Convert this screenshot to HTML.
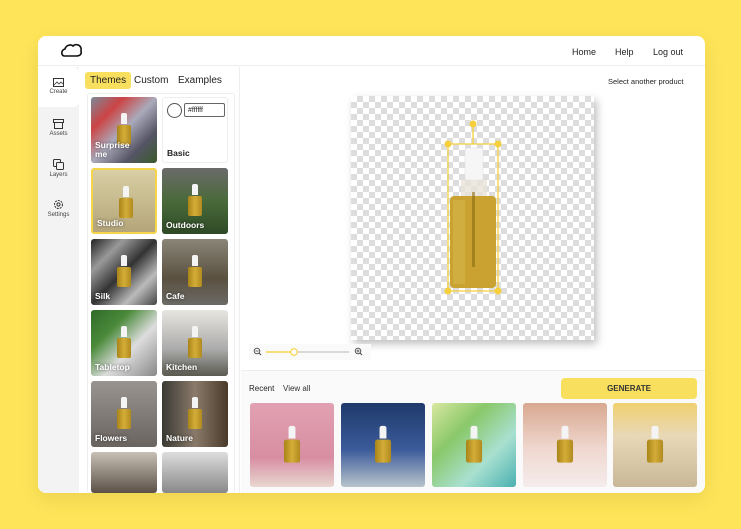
<!DOCTYPE html>
<html><head><meta charset="utf-8"><style>
*{box-sizing:border-box;margin:0;padding:0}
body{width:741px;height:529px;background:#fde458;font-family:"Liberation Sans",sans-serif;position:relative;overflow:hidden}
.card{position:absolute;left:38px;top:36px;width:667px;height:457px;background:#fff;border-radius:8px;overflow:hidden;box-shadow:0 6px 20px rgba(0,0,0,.08)}
.hdr{position:absolute;left:0;top:0;width:667px;height:30px;border-bottom:1px solid #eee}
.nav{position:absolute;top:11px;font-size:9px;color:#222}
.side{position:absolute;left:0;top:31px;width:41px;height:426px;background:#f3f3f3}
.si{position:absolute;left:0;width:41px;text-align:center;font-size:6px;color:#444}
.si svg{display:block;margin:0 auto 2px}
.panel{position:absolute;left:41px;top:31px;width:161px;height:426px;border-right:1px solid #eee}
.tab{position:absolute;top:5px;font-size:10px;color:#222;padding:3px 5px;border-radius:3px}
.tile{position:absolute;width:66px;height:66px;border-radius:3px;overflow:hidden}
.tile span{position:absolute;left:4px;bottom:4px;color:#fff;font-weight:bold;font-size:8.5px;line-height:9px;text-shadow:0 0 3px rgba(0,0,0,.6)}
.b{position:absolute;width:14px;height:22px;left:26px;top:26px}
.b:before{content:"";position:absolute;left:4px;top:-10px;width:6px;height:11px;background:#f4f4f4;border-radius:2px 2px 0 0}
.b:after{content:"";position:absolute;left:0;top:2px;width:14px;height:20px;background:linear-gradient(90deg,#a88418,#d4ad38,#b08a1e);border-radius:2px}
.checker{position:absolute;left:313px;top:60px;width:243px;height:244px;background-color:#fff;background-image:linear-gradient(45deg,#ddd 25%,transparent 25%,transparent 75%,#ddd 75%),linear-gradient(45deg,#ddd 25%,transparent 25%,transparent 75%,#ddd 75%);background-size:12px 12px;background-position:0 0,6px 6px;box-shadow:3px 4px 8px rgba(0,0,0,.25)}
.bottom{position:absolute;left:203px;top:334px;width:464px;height:123px;background:#fafafa;border-top:1px solid #eee}
.th{position:absolute;top:32px;width:84px;height:84px;border-radius:3px;overflow:hidden}
.th .b{left:35px;top:36px;transform:scale(1.15)}
</style></head><body>
<div class="card">
 <div class="hdr">
  <svg style="position:absolute;left:23px;top:7px" width="22" height="15" viewBox="0 0 22 15"><path d="M3 13 C0 12 0 7 4 6 C5 2 10 1 12 3 C15 0 21 2 20 8 C21 12 18 13 15 13 Z" fill="none" stroke="#111" stroke-width="1.6"/></svg>
  <div class="nav" style="left:534px">Home</div>
  <div class="nav" style="left:577px">Help</div>
  <div class="nav" style="left:615px">Log out</div>
 </div>
 <div class="side">
  <div class="si" style="top:0;height:40px;background:#fff;border-radius:0 6px 6px 0;padding-top:11px"><svg width="11" height="9" viewBox="0 0 11 9"><rect x=".5" y=".5" width="10" height="8" fill="none" stroke="#333"/><path d="M1 7l3-3 2 2 2-2 2 2" fill="none" stroke="#333" stroke-width=".8"/></svg>Create</div>
  <div class="si" style="top:52px"><svg width="11" height="10" viewBox="0 0 11 10"><rect x=".5" y=".5" width="10" height="3" fill="none" stroke="#333"/><rect x="1.5" y="3.5" width="8" height="6" fill="none" stroke="#333"/></svg>Assets</div>
  <div class="si" style="top:92px"><svg width="11" height="11" viewBox="0 0 11 11"><rect x=".5" y=".5" width="7" height="7" rx="1" fill="none" stroke="#333"/><rect x="3.5" y="3.5" width="7" height="7" rx="1" fill="#f3f3f3" stroke="#333"/></svg>Layers</div>
  <div class="si" style="top:132px"><svg width="11" height="11" viewBox="0 0 11 11"><circle cx="5.5" cy="5.5" r="4" fill="none" stroke="#333" stroke-dasharray="2 1"/><circle cx="5.5" cy="5.5" r="1.6" fill="none" stroke="#333"/></svg>Settings</div>
 </div>
 <div class="panel">
  <div class="tab" style="left:6px;background:#f9df5e">Themes</div>
  <div class="tab" style="left:50px">Custom</div>
  <div class="tab" style="left:94px">Examples</div>
  <div style="position:absolute;left:8px;top:26px;width:148px;height:400px;border:1px solid #eee;border-bottom:none;border-radius:3px"></div>
  <div class="tile" style="left:12px;top:30px;background:linear-gradient(135deg,#7a8a9a,#c44,#aab,#556,#3a5a2a)"><div class="b"></div><span>Surprise<br>me</span></div>
  <div class="tile" style="left:83px;top:30px;border:1px solid #eee;background:#fff"><div style="position:absolute;left:4px;top:5px;width:15px;height:15px;border:1px solid #555;border-radius:50%"></div><div style="position:absolute;left:21px;top:5px;width:41px;height:14px;border:1px solid #666;border-radius:2px;font-size:7px;padding:3px 3px;color:#222">#ffffff</div><span style="color:#222;text-shadow:none">Basic</span></div>
  <div class="tile" style="left:12px;top:101px;background:linear-gradient(#d9cfa4,#b4a57a);border:2px solid #f6d54b"><div class="b"></div><span>Studio</span></div>
  <div class="tile" style="left:83px;top:101px;background:linear-gradient(#6a6a6a,#4a6a3a 50%,#2e4a26)"><div class="b"></div><span>Outdoors</span></div>
  <div class="tile" style="left:12px;top:172px;background:linear-gradient(135deg,#222,#999,#333,#bbb,#444)"><div class="b"></div><span>Silk</span></div>
  <div class="tile" style="left:83px;top:172px;background:linear-gradient(#8a8578,#5a5040 60%,#6b6a66)"><div class="b"></div><span>Cafe</span></div>
  <div class="tile" style="left:12px;top:243px;background:linear-gradient(135deg,#2f6a2a,#4a8a3a,#ddd 60%,#888)"><div class="b"></div><span>Tabletop</span></div>
  <div class="tile" style="left:83px;top:243px;background:linear-gradient(#e8e6e0,#aaa 60%,#5a5a50)"><div class="b"></div><span>Kitchen</span></div>
  <div class="tile" style="left:12px;top:314px;background:linear-gradient(#9a9490,#6a6460)"><div class="b"></div><span>Flowers</span></div>
  <div class="tile" style="left:83px;top:314px;background:linear-gradient(90deg,#3a3a34,#8a7a6a,#4a3a2a)"><div class="b"></div><span>Nature</span></div>
  <div class="tile" style="left:12px;top:385px;height:41px;background:linear-gradient(#c8c0b4,#5a5048)"></div>
  <div class="tile" style="left:83px;top:385px;height:41px;background:linear-gradient(#ddd,#888)"></div>
 </div>
 <div style="position:absolute;left:570px;top:41px;font-size:7.5px;color:#222">Select another product</div>
 <div class="checker"></div>
 <svg style="position:absolute;left:403px;top:46px" width="70" height="220" viewBox="0 0 70 220">
  <rect x="24" y="66" width="18" height="32" rx="2" fill="#f6f6f6" stroke="#ddd" stroke-width=".5"/>
  <rect x="20" y="98" width="26" height="17" fill="#e8e4d8" opacity=".8"/>
  <rect x="9" y="114" width="46" height="92" rx="4" fill="#c9a232"/>
  <rect x="12" y="118" width="12" height="84" fill="#d7b54a" opacity=".6"/>
  <rect x="31" y="110" width="3" height="75" fill="#8a6a10" opacity=".6"/>
  <path d="M7 62H57V209H7Z" fill="none" stroke="#f6cf3c" stroke-width="1.3"/>
  <line x1="32" y1="42" x2="32" y2="62" stroke="#f6cf3c" stroke-width="1.3"/>
  <g fill="#f6cf3c"><circle cx="32" cy="42" r="3.5"/><circle cx="7" cy="62" r="3.5"/><circle cx="57" cy="62" r="3.5"/><circle cx="7" cy="209" r="3.5"/><circle cx="57" cy="209" r="3.5"/></g>
 </svg>
 <div style="position:absolute;left:211px;top:308px;width:122px;height:16px;background:#fafafa"></div>
 <svg style="position:absolute;left:215px;top:311px" width="112" height="10" viewBox="0 0 112 10"><circle cx="4" cy="4" r="2.8" fill="none" stroke="#444" stroke-width=".9"/><line x1="6" y1="6" x2="8" y2="8" stroke="#444"/><line x1="2.5" y1="4" x2="5.5" y2="4" stroke="#444" stroke-width=".8"/><line x1="13" y1="5" x2="41" y2="5" stroke="#f6d54b" stroke-width="1.5"/><line x1="41" y1="5" x2="96" y2="5" stroke="#ccc" stroke-width="1.5"/><circle cx="41" cy="5" r="3.3" fill="#fff" stroke="#f6d54b" stroke-width="1.2"/><circle cx="105" cy="4" r="2.8" fill="none" stroke="#444" stroke-width=".9"/><line x1="107" y1="6" x2="109" y2="8" stroke="#444"/><line x1="103.5" y1="4" x2="106.5" y2="4" stroke="#444" stroke-width=".8"/><line x1="105" y1="2.5" x2="105" y2="5.5" stroke="#444" stroke-width=".8"/></svg>
 <div class="bottom">
  <div style="position:absolute;left:8px;top:13px;font-size:8px;color:#222">Recent</div>
  <div style="position:absolute;left:42px;top:13px;font-size:8px;color:#333">View all</div>
  <div style="position:absolute;left:320px;top:7px;width:136px;height:21px;background:#f8df5e;border-radius:4px;text-align:center;font-size:8px;line-height:21px;font-weight:bold;color:#333">GENERATE</div>
  <div class="th" style="left:9px;background:linear-gradient(#e1a1b2,#d88ea2 65%,#e8d8d0)"><div class="b"></div></div>
  <div class="th" style="left:100px;background:linear-gradient(#1f3a6a,#3a5a9a 55%,#b8c4cc)"><div class="b"></div></div>
  <div class="th" style="left:191px;background:linear-gradient(135deg,#d8e8a0,#8ac86a,#a8e0d0,#4ab0b0)"><div class="b"></div></div>
  <div class="th" style="left:282px;background:linear-gradient(#d8a890,#f0d8d0 55%,#f4ecec)"><div class="b"></div></div>
  <div class="th" style="left:372px;background:linear-gradient(#f0d070,#e8d8b8 40%,#c8b898)"><div class="b"></div></div>
 </div>
</div>
</body></html>
